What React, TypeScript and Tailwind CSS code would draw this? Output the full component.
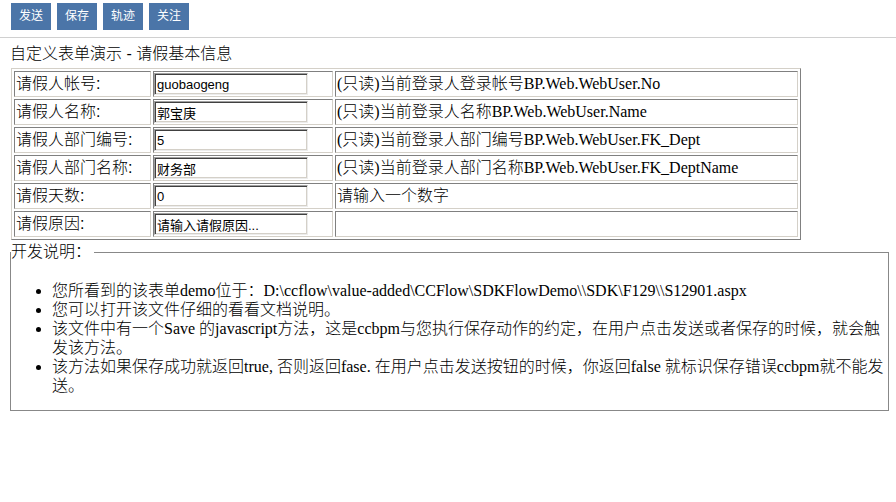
import React from "react";

const sans = "font-['Liberation_Sans','Noto_Sans_CJK_SC',sans-serif]";
const serif = "font-['Liberation_Serif','Noto_Sans_CJK_SC',serif]";

const rows: { label: string; value: string; note: string }[] = [
  { label: "请假人帐号:", value: "guobaogeng", note: "(只读)当前登录人登录帐号BP.Web.WebUser.No" },
  { label: "请假人名称:", value: "郭宝庚", note: "(只读)当前登录人名称BP.Web.WebUser.Name" },
  { label: "请假人部门编号:", value: "5", note: "(只读)当前登录人部门编号BP.Web.WebUser.FK_Dept" },
  { label: "请假人部门名称:", value: "财务部", note: "(只读)当前登录人部门名称BP.Web.WebUser.FK_DeptName" },
  { label: "请假天数:", value: "0", note: "请输入一个数字" },
  { label: "请假原因:", value: "请输入请假原因...", note: "" },
];

const cell =
  "h-[26px] border border-t-[#808080] border-l-[#808080] border-b-[#d4d0c8] border-r-[#d4d0c8] flex items-center overflow-hidden whitespace-nowrap";

export default function App() {
  return (
    <div className={`bg-white min-h-screen text-black font-light ${sans}`}>
      <div className="flex gap-[6px] pl-[11px] pt-[3px] h-[38px] border-b border-[#d0d0d0]">
        {["发送", "保存", "轨迹", "关注"].map((b) => (
          <button
            key={b}
            className="w-[40px] h-[27px] bg-[#4b75a8] text-white text-[12px] font-normal leading-[27px] flex items-center justify-center"
          >
            {b}
          </button>
        ))}
      </div>
      <div className="pl-[10px] pt-[6px] text-[16px] leading-[20px]">自定义表单演示 - 请假基本信息</div>
      <div className="ml-[11px] mt-[4px] w-[790px] border border-t-[#d4d0c8] border-l-[#d4d0c8] border-b-[#808080] border-r-[#808080] p-[2px] grid grid-cols-[137px_180px_463px] gap-[2px]">
        {rows.map((r) => (
          <React.Fragment key={r.label}>
            <div className={`${cell} text-[16px] pl-[1px]`}>{r.label}</div>
            <div className={cell}>
              <input
                defaultValue={r.value}
                className={`w-[154px] h-[22px] border border-t-[#a0a0a0] border-l-[#a0a0a0] border-b-[#ececec] border-r-[#ececec] shadow-[inset_1px_1px_0_#404040,inset_-1px_-1px_0_#d4d0c8] pl-[2px] text-[13px] font-normal text-black bg-white outline-none ${sans}`}
              />
            </div>
            <div className={`${cell} ${serif} text-[16px] pl-[1px]`}>{r.note}</div>
          </React.Fragment>
        ))}
      </div>
      <fieldset className="ml-[10px] mt-[2px] w-[879px] border border-[#888888]">
        <legend className="text-[16px] leading-[20px] pr-[3px]">开发说明：</legend>
        <ul className={`list-disc pl-[41px] mt-[19px] mb-[15px] text-[16px] leading-[19px] ${serif}`}>
          <li>您所看到的该表单demo位于：D:\ccflow\value-added\CCFlow\SDKFlowDemo\\SDK\F129\\S12901.aspx</li>
          <li>您可以打开该文件仔细的看看文档说明。</li>
          <li>该文件中有一个Save 的javascript方法，这是ccbpm与您执行保存动作的约定，在用户点击发送或者保存的时候，就会触发该方法。</li>
          <li>该方法如果保存成功就返回true, 否则返回fase. 在用户点击发送按钮的时候，你返回false 就标识保存错误ccbpm就不能发送。</li>
        </ul>
      </fieldset>
    </div>
  );
}
